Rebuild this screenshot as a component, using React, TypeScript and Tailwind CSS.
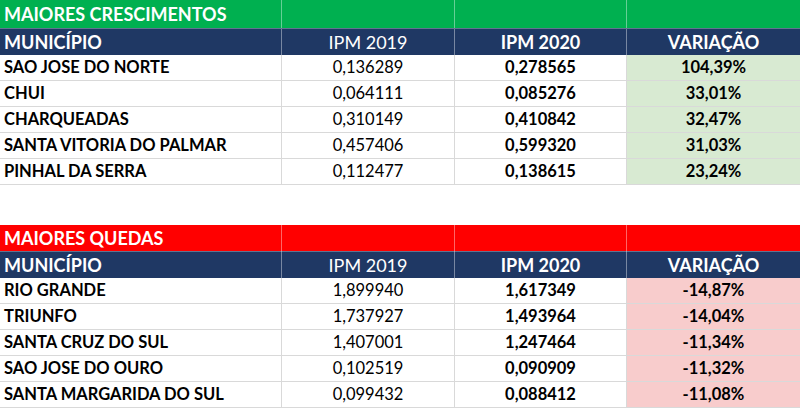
import React from "react";

const up = [
  ["SAO JOSE DO NORTE", "0,136289", "0,278565", "104,39%"],
  ["CHUI", "0,064111", "0,085276", "33,01%"],
  ["CHARQUEADAS", "0,310149", "0,410842", "32,47%"],
  ["SANTA VITORIA DO PALMAR", "0,457406", "0,599320", "31,03%"],
  ["PINHAL DA SERRA", "0,112477", "0,138615", "23,24%"],
];

const down = [
  ["RIO GRANDE", "1,899940", "1,617349", "-14,87%"],
  ["TRIUNFO", "1,737927", "1,493964", "-14,04%"],
  ["SANTA CRUZ DO SUL", "1,407001", "1,247464", "-11,34%"],
  ["SAO JOSE DO OURO", "0,102519", "0,090909", "-11,32%"],
  ["SANTA MARGARIDA DO SUL", "0,099432", "0,088412", "-11,08%"],
];

const cols = "grid grid-cols-[282px_173px_172px_173px]";

function Table({ title, titleBg, hiBg, rows, titleH }: { title: string; titleBg: string; hiBg: string; rows: string[][]; titleH: string }) {
  return (
    <div>
      <div className={`${cols} ${titleH} ${titleBg} text-white font-bold text-[18px]`}>
        <div className="px-1 flex items-center border-r border-white/40">{title}</div>
        <div className="border-r border-white/40" />
        <div className="border-r border-white/40" />
        <div />
      </div>
      <div className={`${cols} h-[27px] bg-[#1f3864] text-white text-[18px] border-t border-white/30`}>
        <div className="px-1 flex items-center font-bold border-r border-white/40">MUNICÍPIO</div>
        <div className="flex items-center justify-center border-r border-white/40">IPM 2019</div>
        <div className="flex items-center justify-center font-bold border-r border-white/40">IPM 2020</div>
        <div className="flex items-center justify-center font-bold">VARIAÇÃO</div>
      </div>
      {rows.map((r) => (
        <div key={r[0]} className={`${cols} h-[26px] text-[16.5px] text-black border-b border-[#d9d9d9]`}>
          <div className="px-1 flex items-center font-bold border-r border-[#d9d9d9] whitespace-nowrap">{r[0]}</div>
          <div className="flex items-center justify-center border-r border-[#d9d9d9]">{r[1]}</div>
          <div className="flex items-center justify-center font-bold border-r border-[#d9d9d9]">{r[2]}</div>
          <div className={`flex items-center justify-center font-bold ${hiBg}`}>{r[3]}</div>
        </div>
      ))}
    </div>
  );
}

export default function App() {
  return (
    <div className="w-[800px] h-[408px] bg-white overflow-hidden" style={{ fontFamily: "Lato, 'Liberation Sans', sans-serif" }}>
      <Table title="MAIORES CRESCIMENTOS" titleBg="bg-[#00b050]" hiBg="bg-[#d8ead2]" rows={up} titleH="h-[28px]" />
      <div className="h-[40px]" />
      <Table title="MAIORES QUEDAS" titleBg="bg-[#ff0000]" hiBg="bg-[#f8cccc]" rows={down} titleH="h-[26px]" />
    </div>
  );
}
